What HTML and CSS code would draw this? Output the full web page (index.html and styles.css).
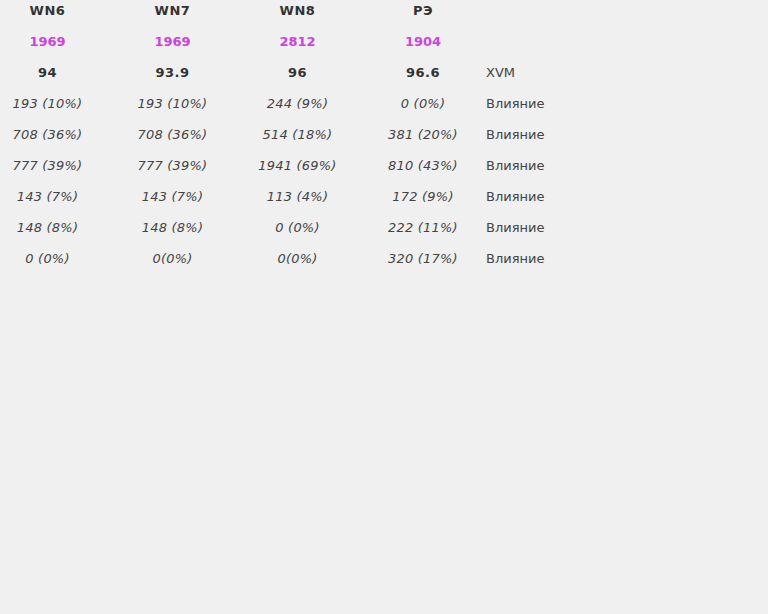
FILE: index.html
```html
<!DOCTYPE html>
<html>
<head>
<meta charset="utf-8">
<link rel="stylesheet" href="styles.css">
</head>
<body>
<div class="stats">
  <div class="row head"><span class="c">WN6</span><span class="c">WN7</span><span class="c">WN8</span><span class="c">РЭ</span><span class="lbl"></span></div>
  <div class="row purple"><span class="c">1969</span><span class="c">1969</span><span class="c">2812</span><span class="c">1904</span><span class="lbl"></span></div>
  <div class="row head"><span class="c">94</span><span class="c">93.9</span><span class="c">96</span><span class="c">96.6</span><span class="lbl">XVM</span></div>
  <div class="row it"><span class="c">193 (10%)</span><span class="c">193 (10%)</span><span class="c">244 (9%)</span><span class="c">0 (0%)</span><span class="lbl">Влияние</span></div>
  <div class="row it"><span class="c">708 (36%)</span><span class="c">708 (36%)</span><span class="c">514 (18%)</span><span class="c">381 (20%)</span><span class="lbl">Влияние</span></div>
  <div class="row it"><span class="c">777 (39%)</span><span class="c">777 (39%)</span><span class="c">1941 (69%)</span><span class="c">810 (43%)</span><span class="lbl">Влияние</span></div>
  <div class="row it"><span class="c">143 (7%)</span><span class="c">143 (7%)</span><span class="c">113 (4%)</span><span class="c">172 (9%)</span><span class="lbl">Влияние</span></div>
  <div class="row it"><span class="c">148 (8%)</span><span class="c">148 (8%)</span><span class="c">0 (0%)</span><span class="c">222 (11%)</span><span class="lbl">Влияние</span></div>
  <div class="row it"><span class="c">0 (0%)</span><span class="c">0(0%)</span><span class="c">0(0%)</span><span class="c">320 (17%)</span><span class="lbl">Влияние</span></div>
</div>
</body>
</html>
```
FILE: styles.css
```css
html, body {
  margin: 0;
  padding: 0;
  background: #f0f0f0;
}
body {
  font-family: "DejaVu Sans", Verdana, sans-serif;
  font-size: 13px;
  color: #333;
}
.stats {
  margin-left: -15px;
  padding-top: 3px;
}
.row {
  display: grid;
  grid-template-columns: 125px 125px 125px 126px auto;
  height: 31px;
  line-height: 16px;
}
.c {
  text-align: center;
}
.lbl {
  padding-left: 0;
  color: #444;
}
.head .c {
  font-weight: bold;
  color: #333;
  letter-spacing: 0.5px;
}
.purple .c {
  font-weight: bold;
  color: #cc44dd;
}
.it .c {
  font-style: italic;
  color: #444;
  letter-spacing: 0.2px;
}
```
